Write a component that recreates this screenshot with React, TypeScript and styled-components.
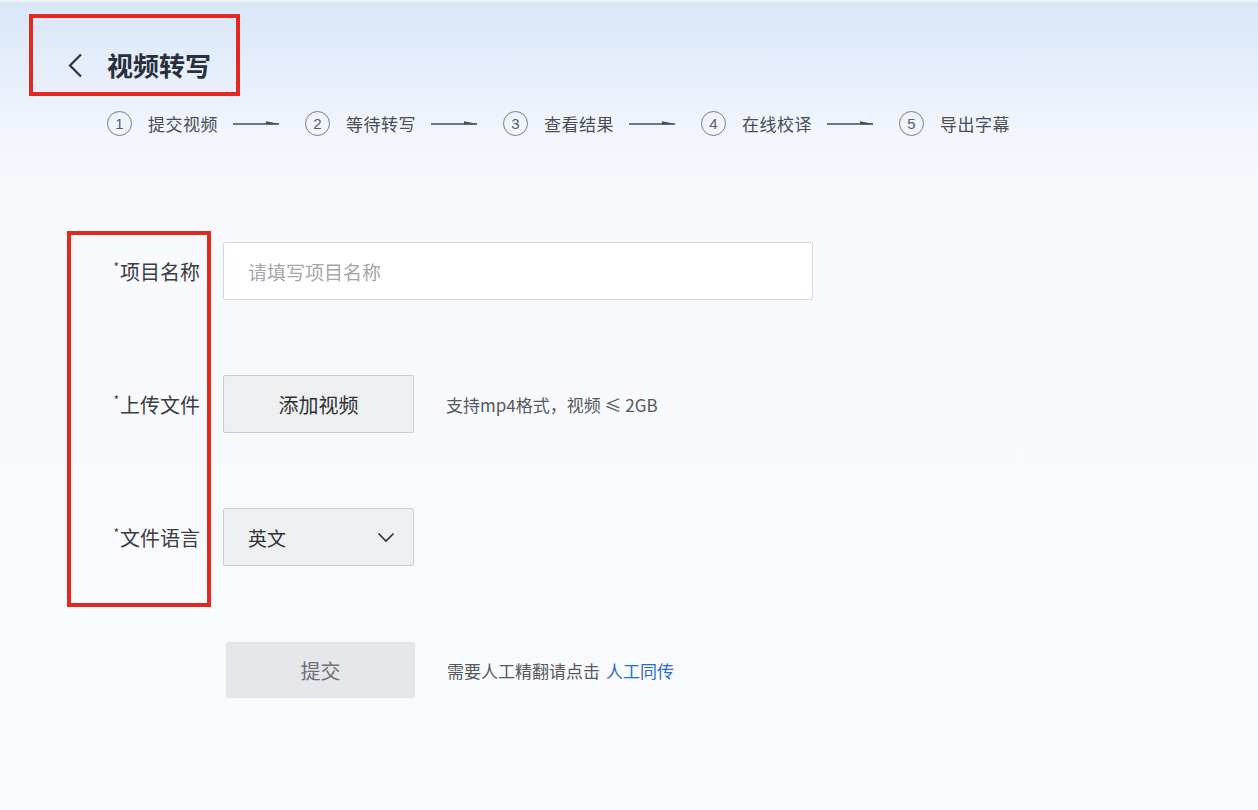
import React, { useState } from 'react';
import styled, { createGlobalStyle } from 'styled-components';

const GlobalStyle = createGlobalStyle`
  * {
    box-sizing: border-box;
  }
  body {
    margin: 0;
    font-family: 'Noto Sans CJK SC', 'Noto Sans', 'Liberation Sans', sans-serif;
    color: #333;
  }
`;

const mark = '#e12a1f';

const Page = styled.div`
  width: 1258px;
  height: 810px;
  overflow: hidden;
  padding: 12px 0 0 29px;
  border-top: 2px solid #eef3f9;
  background: linear-gradient(180deg, #d8e6f8 0px, #e6eefa 70px, #f1f5fc 130px, #f7f9fd 190px, #f9fafd 100%);
`;

const HeaderBox = styled.div`
  display: inline-flex;
  align-items: center;
  gap: 24px;
  height: 82px;
  padding: 20px 25px 0 34px;
  border: 4px solid ${mark};
`;

const BackButton = styled.button`
  display: flex;
  align-items: center;
  padding: 0;
  border: 0;
  background: none;
  cursor: pointer;
`;

const Title = styled.h1`
  margin: 0;
  font-size: 26px;
  font-weight: 700;
  color: #2a2f3b;
  line-height: 1;
`;

const Steps = styled.ol`
  display: flex;
  align-items: center;
  margin: 15px 0 0 78px;
  padding: 0;
  list-style: none;
`;

const Step = styled.li`
  display: flex;
  align-items: center;
  gap: 16px;
  height: 24px;
`;

const StepNo = styled.span`
  display: flex;
  align-items: center;
  justify-content: center;
  width: 25px;
  height: 25px;
  border: 1px solid #7a7d83;
  border-radius: 50%;
  font-family: 'Liberation Sans', sans-serif;
  font-size: 15px;
  color: #5a5d63;
`;

const StepText = styled.span`
  font-size: 17px;
  letter-spacing: 0.5px;
  color: #4a4d53;
`;

const StepArrow = styled.svg`
  margin: 0 25px 0 -1px;
  flex: none;
`;

const Form = styled.form`
  display: flex;
  align-items: flex-start;
  gap: 12px;
  margin: 96px 0 0 38px;
`;

const LabelBox = styled.div`
  display: flex;
  flex-direction: column;
  gap: 75px;
  width: 144px;
  padding: 7px 7px 37px 0;
  border: 4px solid ${mark};
`;

const Label = styled.label`
  display: flex;
  align-items: center;
  justify-content: flex-end;
  height: 58px;
  font-size: 20px;
  color: #3a3d42;

  &::before {
    content: '*';
    font-size: 12px;
    margin-right: 1px;
    transform: translateY(-5px);
  }
`;

const Controls = styled.div`
  display: flex;
  flex-direction: column;
  gap: 75px;
  padding-top: 11px;
`;

const Row = styled.div<{ $shift?: number }>`
  display: flex;
  align-items: center;
  gap: 32px;
  height: 58px;
  margin-left: ${(p) => p.$shift ?? 0}px;
`;

const TextInput = styled.input`
  width: 590px;
  height: 58px;
  padding: 0 24px;
  border: 1px solid #d5d7db;
  border-radius: 2px;
  background: #fff;
  font-family: inherit;
  font-size: 19px;
  color: #333;
  outline: none;

  &::placeholder {
    color: #a4a6ab;
  }
`;

const GreyButton = styled.button<{ $muted?: boolean }>`
  width: ${(p) => (p.$muted ? 189 : 191)}px;
  height: ${(p) => (p.$muted ? 56 : 58)}px;
  border: 1px solid ${(p) => (p.$muted ? '#e2e3e6' : '#cbcdd1')};
  border-radius: 2px;
  background: ${(p) => (p.$muted ? '#e5e6e9' : '#eeeff1')};
  font-family: inherit;
  font-size: 20px;
  color: ${(p) => (p.$muted ? '#6e7076' : '#2e3137')};
  cursor: pointer;
`;

const SelectBox = styled.button`
  display: flex;
  align-items: center;
  justify-content: space-between;
  width: 191px;
  height: 58px;
  padding: 0 18px 0 24px;
  border: 1px solid #cbcdd1;
  border-radius: 2px;
  background: #eeeff1;
  font-family: inherit;
  font-size: 19px;
  color: #2e3137;
  cursor: pointer;
`;

const Hint = styled.span`
  font-size: 17px;
  color: #55585e;
`;

const Link = styled.a`
  color: #2c6cc9;
  text-decoration: none;
  margin-left: 6px;
`;

const steps = ['提交视频', '等待转写', '查看结果', '在线校译', '导出字幕'];

const App: React.FC = () => {
  const [name, setName] = useState('');

  return (
    <>
      <GlobalStyle />
      <Page>
        <HeaderBox>
          <BackButton type="button" aria-label="返回">
            <svg width="16" height="25" viewBox="0 0 16 25">
              <path d="M14 1.5 L3 12.5 L14 23.5" fill="none" stroke="#2f333b" strokeWidth="2.2" />
            </svg>
          </BackButton>
          <Title>视频转写</Title>
        </HeaderBox>

        <Steps>
          {steps.map((s, i) => (
            <Step key={s}>
              <StepNo>{i + 1}</StepNo>
              <StepText>{s}</StepText>
              {i < steps.length - 1 && (
                <StepArrow width="47" height="8" viewBox="0 0 47 8">
                  <line x1="0" y1="5" x2="46" y2="5" stroke="#4a4d53" strokeWidth="1.3" />
                  <polygon points="33,2.2 47,5 33,5.6" fill="#4a4d53" />
                </StepArrow>
              )}
            </Step>
          ))}
        </Steps>

        <Form onSubmit={(e) => e.preventDefault()}>
          <LabelBox>
            <Label htmlFor="project-name">项目名称</Label>
            <Label>上传文件</Label>
            <Label>文件语言</Label>
          </LabelBox>
          <Controls>
            <Row>
              <TextInput
                id="project-name"
                value={name}
                placeholder="请填写项目名称"
                onChange={(e) => setName(e.currentTarget.value)}
              />
            </Row>
            <Row>
              <GreyButton type="button">添加视频</GreyButton>
              <Hint>支持mp4格式，视频 ≤ 2GB</Hint>
            </Row>
            <Row>
              <SelectBox type="button">
                英文
                <svg width="18" height="11" viewBox="0 0 18 11">
                  <path d="M1.5 1.5 L9 9 L16.5 1.5" fill="none" stroke="#2f333b" strokeWidth="1.6" />
                </svg>
              </SelectBox>
            </Row>
            <Row $shift={3}>
              <GreyButton type="submit" $muted>
                提交
              </GreyButton>
              <Hint>
                需要人工精翻请点击
                <Link href="#">人工同传</Link>
              </Hint>
            </Row>
          </Controls>
        </Form>
      </Page>
    </>
  );
};

export default App;
